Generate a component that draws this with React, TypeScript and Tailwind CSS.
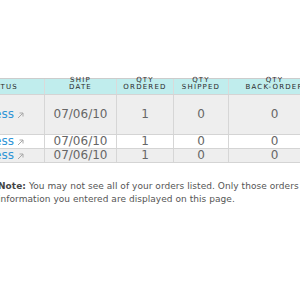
import React from "react";

const rows = [
  { tall: true, bg: "bg-[#eeeeee]" },
  { tall: false, bg: "bg-white" },
  { tall: false, bg: "bg-[#eeeeee]" },
];

function ExtArrow() {
  return (
    <svg width="7" height="7" viewBox="0 0 7 7" className="ml-[3px] mt-[1px] shrink-0">
      <path d="M1 6 L6 1 M2.5 1 H6 V4.5" stroke="#a8a8a8" strokeWidth="1" fill="none" />
    </svg>
  );
}

export default function App() {
  const th = "flex items-end justify-center pb-[3px] border-r border-[#dadada] text-[7px] leading-[7px] tracking-[1.2px] uppercase text-[#2a2a2a] text-center";
  const td = "flex items-center justify-center border-r border-[#d6d6d6] text-[12px] leading-[13px] text-[#666666]";

  return (
    <div className="w-[300px] h-[300px] overflow-hidden bg-white font-['DejaVu_Sans',Verdana,sans-serif]">
      <div className="pt-[78px]">
        {/* Orders table */}
        <div className="-ml-[60px] w-[400px] border-t border-[#cccccc]">
          <div className="flex h-[16px] bg-[#c0eded] border-b border-[#d4d4d4]">
            <div className={`${th} w-[105px] !justify-end pr-[26px]`}>Status</div>
            <div className={`${th} w-[72px]`}>Ship<br />Date</div>
            <div className={`${th} w-[57px]`}>Qty<br />Ordered</div>
            <div className={`${th} w-[55px]`}>Qty<br />Shipped</div>
            <div className={`${th} w-[92px]`}>Qty<br />Back-Order</div>
          </div>

          {rows.map((r, i) => (
            <div key={i} className={`flex ${r.tall ? "h-[40px]" : "h-[14px]"} ${r.bg} border-b border-[#d4d4d4]`}>
              <div className={`${td} w-[105px] !justify-end pr-[20px]`}>
                <a className="text-[#2f95d6]">In Process</a>
                <ExtArrow />
              </div>
              <div className={`${td} w-[72px]`}>07/06/10</div>
              <div className={`${td} w-[57px]`}>1</div>
              <div className={`${td} w-[55px]`}>0</div>
              <div className={`${td} w-[92px]`}>0</div>
            </div>
          ))}
        </div>

        {/* Note */}
        <p className="mt-[17px] -ml-[2px] w-[440px] whitespace-nowrap text-[9px] tracking-[0.05px] leading-[13px] text-[#555555]">
          <b className="text-[#444444]">Note:</b> You may not see all of your orders listed. Only those orders that match the
          <br />
          information you entered are displayed on this page.
        </p>
      </div>
    </div>
  );
}
